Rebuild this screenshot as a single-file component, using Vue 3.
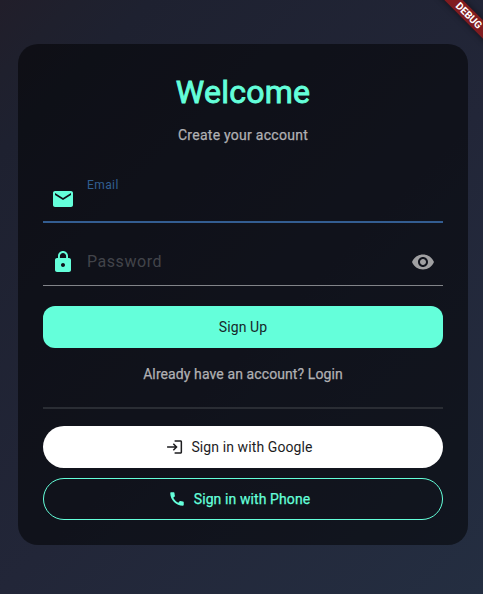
<script setup>
import { ref } from 'vue'

const email = ref('')
const password = ref('')
</script>

<template>
  <main class="page">
    <section class="card">
      <h1 class="title">Welcome</h1>
      <p class="subtitle">Create your account</p>

      <label class="field field--focused">
        <svg class="field-icon" viewBox="0 0 24 24"><path d="M20 4H4c-1.1 0-1.99.9-1.99 2L2 18c0 1.1.9 2 2 2h16c1.1 0 2-.9 2-2V6c0-1.1-.9-2-2-2zm0 4l-8 5-8-5V6l8 5 8-5v2z" /></svg>
        <span class="field-label">Email</span>
        <input v-model="email" class="field-input" type="email" />
      </label>

      <label class="field">
        <svg class="field-icon" viewBox="0 0 24 24"><path d="M18 8h-1V6c0-2.76-2.24-5-5-5S7 3.24 7 6v2H6c-1.1 0-2 .9-2 2v10c0 1.1.9 2 2 2h12c1.1 0 2-.9 2-2V10c0-1.1-.9-2-2-2zm-6 9c-1.1 0-2-.9-2-2s.9-2 2-2 2 .9 2 2-.9 2-2 2zm3.1-9H8.9V6c0-1.71 1.39-3.1 3.1-3.1s3.1 1.39 3.1 3.1v2z" /></svg>
        <input v-model="password" class="field-input" type="password" placeholder="Password" />
        <svg class="field-eye" viewBox="0 0 24 24"><path d="M12 4.5C7 4.5 2.73 7.61 1 12c1.73 4.39 6 7.5 11 7.5s9.27-3.11 11-7.5c-1.73-4.39-6-7.5-11-7.5zM12 17c-2.76 0-5-2.24-5-5s2.24-5 5-5 5 2.24 5 5-2.24 5-5 5zm0-8c-1.66 0-3 1.34-3 3s1.34 3 3 3 3-1.34 3-3-1.34-3-3-3z" /></svg>
      </label>

      <button class="btn btn--primary">Sign Up</button>
      <a class="switch">Already have an account? Login</a>
      <hr class="divider" />
      <button class="btn btn--google">
        <svg class="btn-icon" viewBox="-0.8 0 24 24"><path d="M11 7 9.6 8.4l2.6 2.6H2v2h10.2l-2.6 2.6L11 17l5-5-5-5zm9 12h-8v2h8c1.1 0 2-.9 2-2V5c0-1.1-.9-2-2-2h-8v2h8v14z" /></svg>
        <span>Sign in with Google</span>
      </button>
      <button class="btn btn--phone">
        <svg class="btn-icon" viewBox="0 0 24 24"><path d="M20.01 15.38c-1.23 0-2.42-.2-3.53-.56-.35-.12-.74-.03-1.01.24l-1.57 1.97c-2.83-1.35-5.48-3.9-6.89-6.83l1.95-1.66c.27-.28.35-.67.24-1.02-.37-1.11-.56-2.3-.56-3.53 0-.54-.45-.99-.99-.99H4.19C3.65 3 3 3.24 3 3.99 3 13.28 10.73 21 20.01 21c.71 0 .99-.63.99-1.18v-3.45c0-.54-.45-.99-.99-.99z" /></svg>
        <span>Sign in with Phone</span>
      </button>
    </section>
    <div class="banner">DEBUG</div>
  </main>
</template>

<style>
body {
  margin: 0;
}
</style>

<style scoped>
.page {
  position: relative;
  box-sizing: border-box;
  width: 100%;
  height: 100vh;
  padding: 44px 15px 49px 18px;
  overflow: hidden;
  background: linear-gradient(135deg, #211e2a 0%, #1f202d 7%, #1e2130 14%, #222638 55%, #242e41 100%);
  font-family: Roboto, sans-serif;
}
.card {
  box-sizing: border-box;
  display: flex;
  flex-direction: column;
  height: 501px;
  padding: 25px;
  border-radius: 20px;
  background: rgba(0, 0, 0, 0.51);
}
.title {
  margin: 3px 0 0;
  color: #64ffda;
  font-size: 32px;
  font-weight: 400;
  letter-spacing: 0.25px;
  line-height: 40px;
  text-align: center;
  -webkit-text-stroke: 0.9px #64ffda;
}
.subtitle {
  margin: 13px 0 0;
  color: #b0b0b3;
  font-size: 14px;
  font-weight: 400;
  letter-spacing: 0.27px;
  line-height: 20px;
  text-align: center;
  -webkit-text-stroke: 0.25px #b0b0b3;
}
.field {
  position: relative;
  box-sizing: border-box;
  display: flex;
  align-items: center;
  height: 48px;
  margin-top: 16px;
  border-bottom: 1px solid #828489;
}
.field--focused {
  margin-top: 30px;
  padding-top: 2px;
  border-bottom: 2px solid #335d91;
}
.field-icon {
  width: 24px;
  height: 24px;
  margin: 0 12px 0 8px;
  fill: #64ffda;
}
.field-label {
  position: absolute;
  top: 2px;
  left: 44px;
  color: #315f91;
  font-size: 12px;
  letter-spacing: 0.4px;
  line-height: 16px;
}
.field-input {
  flex: 1;
  min-width: 0;
  padding: 0;
  border: 0;
  outline: 0;
  background: transparent;
  color: #fff;
  font: 16px/24px Roboto, sans-serif;
  letter-spacing: 0.55px;
}
.field-input::placeholder {
  color: #42444a;
  opacity: 1;
}
.field-eye {
  width: 24px;
  height: 24px;
  margin-right: 8px;
  fill: #a0a0a2;
}
.btn {
  box-sizing: border-box;
  display: flex;
  flex: none;
  align-items: center;
  justify-content: center;
  gap: 8px;
  width: 100%;
  height: 42px;
  padding: 0;
  border: 0;
  font: 400 14px/20px Roboto, sans-serif;
  letter-spacing: 0.1px;
}
.btn--primary {
  margin-top: 20px;
  border-radius: 12px;
  background: #64ffda;
  color: #16282b;
}
.btn--google {
  margin-top: 17px;
  padding-right: 8px;
  border-radius: 21px;
  background: #fff;
  color: #1d1d1f;
}
.btn--phone {
  margin-top: 10px;
  padding-right: 8px;
  border: 1px solid #64ffda;
  border-radius: 21px;
  background: transparent;
  color: #64ffda;
  -webkit-text-stroke: 0.25px #64ffda;
}
.btn-icon {
  width: 18px;
  height: 18px;
  fill: currentColor;
}
.switch {
  margin-top: 16px;
  color: #b0b0b3;
  font-size: 14px;
  font-weight: 400;
  letter-spacing: 0.1px;
  line-height: 20px;
  text-align: center;
  -webkit-text-stroke: 0.25px #b0b0b3;
}
.divider {
  width: 100%;
  height: 2px;
  margin: 23px 0 0;
  border: 0;
  background: #2a2d34;
}
.banner {
  position: absolute;
  top: 9px;
  right: -26px;
  width: 80px;
  height: 13px;
  background: #801c20;
  box-shadow: 0 0 6px rgba(0, 0, 0, 0.5);
  color: #fff;
  font-size: 10.2px;
  font-weight: 700;
  line-height: 14px;
  text-align: center;
  transform: rotate(45deg);
}
</style>
